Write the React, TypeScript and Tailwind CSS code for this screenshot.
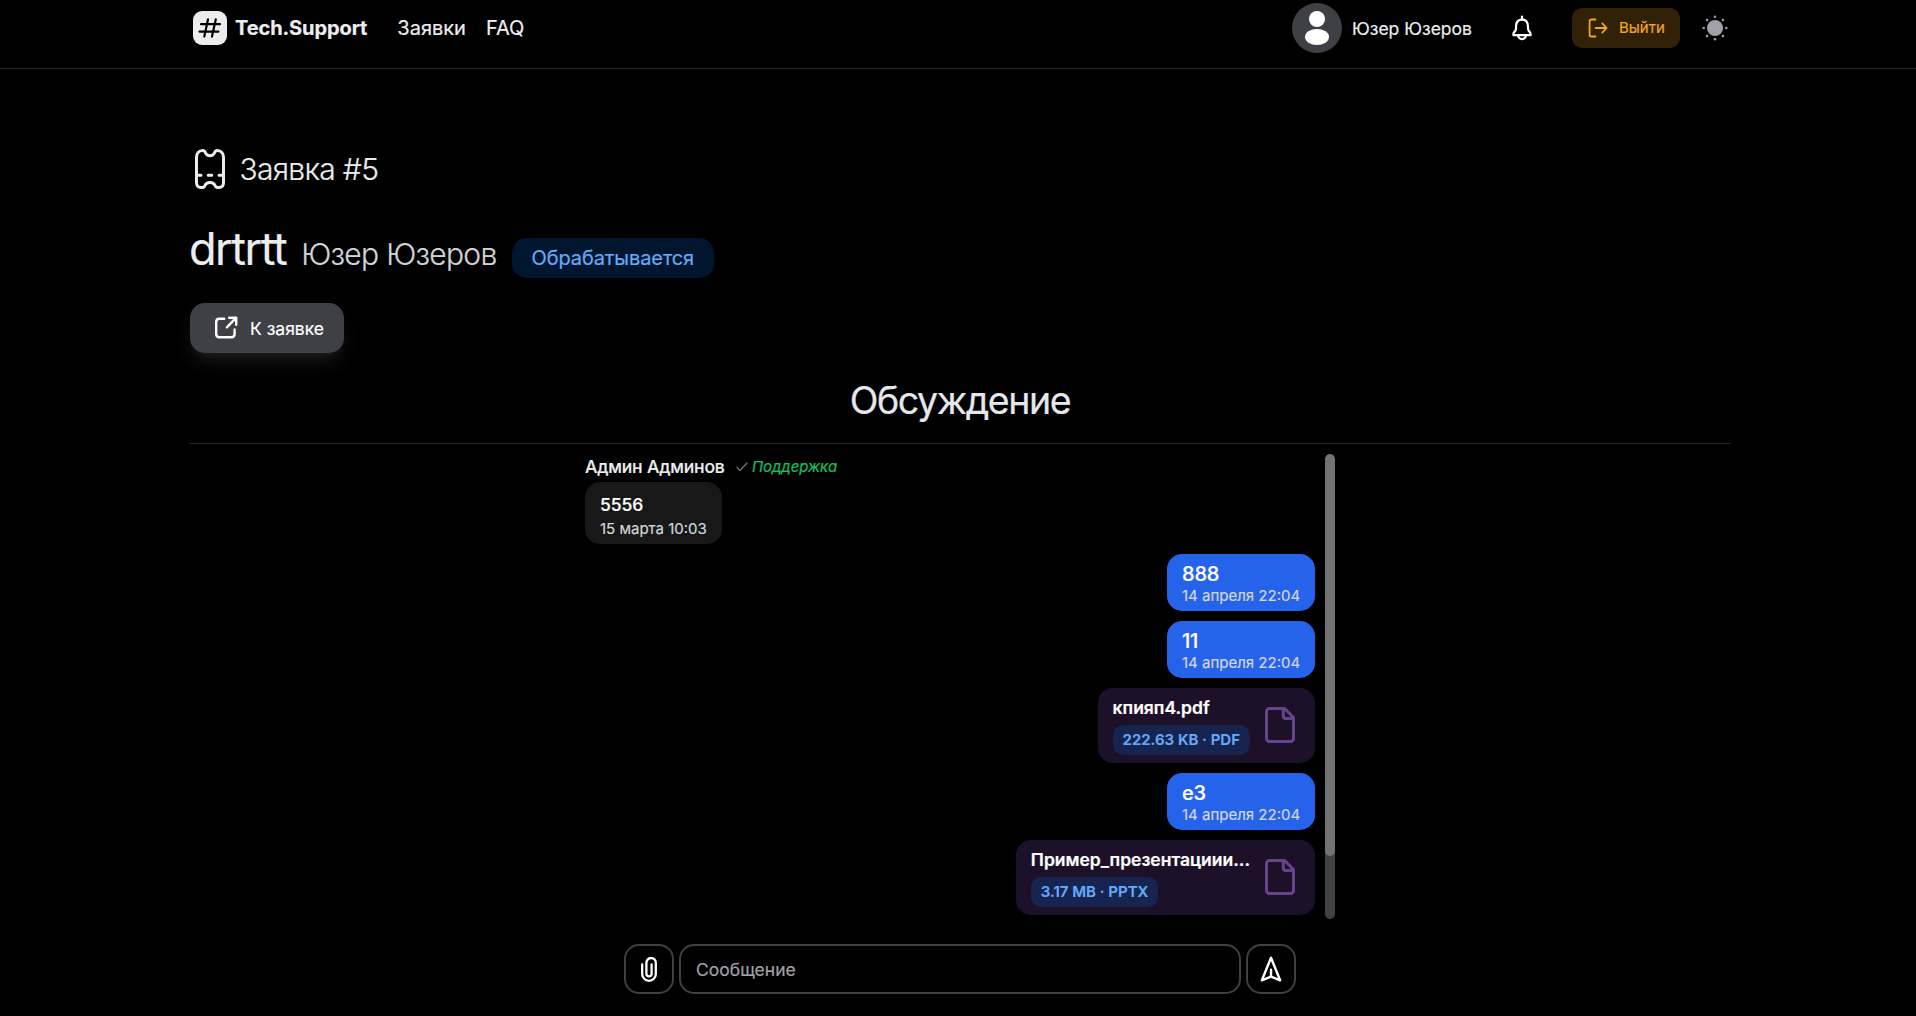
import React from "react";

function LogoIcon() {
  return (
    <svg width="34" height="34" viewBox="0 0 34 34" fill="none">
      <rect width="34" height="34" rx="9" fill="#ecedee" />
      <path
        d="M15 8.3 L11.3 25.600 M22.800 8.300 L19 25.600 M8 13.2 H27 M6.5 20.6 H25.500"
        stroke="#000"
        strokeWidth="2.2"
        strokeLinecap="round"
      />
    </svg>
  );
}

function BellIcon() {
  return (
    <svg width="30" height="30" viewBox="0 0 30 30" fill="none" stroke="#fff" strokeWidth="2.2" strokeLinecap="round" strokeLinejoin="round">
      <path d="M15 3.600V6" />
      <path d="M15 6.600c-3.700 0-5.700 2.700-5.900 6.200l-.2 3.400c-.1 1-.5 1.700-1.300 2.400-1 .9-1.300 1.600-1.300 3.500h17.400c0-1.900-.3-2.600-1.300-3.500-.8-.7-1.200-1.400-1.300-2.400l-.2-3.400c-.2-3.500-2.200-6.200-5.900-6.200z" />
      <path d="M11.200 23.400c.8 1.900 2.100 2.800 3.800 2.800s3-.9 3.800-2.800" />
    </svg>
  );
}

function LogoutIcon() {
  return (
    <svg width="20" height="20" viewBox="0 0 20 20" fill="none" stroke="#f5a524" strokeWidth="1.800" strokeLinecap="round" strokeLinejoin="round">
      <path d="M7.500 1.500H3.300c-1 0-1.700.6-1.700 1.700v13.600c0 1.100.7 1.700 1.700 1.700h4.200" />
      <path d="M7.600 10h10.800M14.300 5.400l4.300 4.600-4.300 4.600" />
    </svg>
  );
}

function SunIcon() {
  return (
    <svg width="28" height="28" viewBox="0 0 28 28" fill="#a1a1aa">
      <circle cx="14" cy="14" r="8" />
      {[
        [14, 2.7], [22, 6], [25.3, 14], [22, 22], [14, 25.3], [6, 22], [2.7, 14], [6, 6],
      ].map(([x, y]) => (
        <circle key={x + "-" + y} cx={x} cy={y} r="1.25" />
      ))}
    </svg>
  );
}

function TicketIcon() {
  return (
    <svg width="40" height="44" viewBox="0 0 40 44" fill="none" stroke="#ecedee" strokeWidth="3" strokeLinecap="round" strokeLinejoin="round">
      <path d="M12.8 3.5c1.5 0 2 .7 2.5 2 .8 2 2.4 3.3 4.7 3.3s3.900-1.300 4.700-3.300c.5-1.300 1-2 2.500-2 4 0 6.300 3 6.300 7v25c0 3.500-1.800 5-4.500 5h-1.500c-1.500 0-2-.7-2.500-2-.8-2-2.700-3-5-3s-4.200 1-5 3c-.5 1.300-1 2-2.500 2H11c-2.700 0-4.500-1.500-4.500-5v-25c0-4 2.300-7 6.300-7z" />
      <path d="M7 28.200h4M18.200 28.200h3.600M29 28.200h4" />
    </svg>
  );
}

function ExternalIcon() {
  return (
    <svg width="24" height="24" viewBox="0 0 24 24" fill="none" stroke="#fff" strokeWidth="2.400" strokeLinecap="round" strokeLinejoin="round">
      <path d="M9.200 2.700H4.400C2.200 2.700 1.200 3.700 1.200 5.900v12.200c0 2.200 1 3.200 3.200 3.200H16.400c2.200 0 3.200-1 3.200-3.200v-4.700" />
      <path d="M11.900 11.300 20.700 2.200M14.200 1.800h7v7" />
    </svg>
  );
}

function FileIcon() {
  return (
    <svg width="30" height="36" viewBox="0 0 30 36" fill="none" stroke="#66458a" strokeWidth="3" strokeLinejoin="round">
      <path d="M4.500 1.500H19.500L28.500 10.500V31.500a3 3 0 0 1-3 3h-21a3 3 0 0 1-3-3v-27a3 3 0 0 1 3-3z" />
      <path d="M18.300 1.500V9a2.500 2.500 0 0 0 2.500 2.500h7.700" />
    </svg>
  );
}

function ClipIcon() {
  return (
    <svg width="16" height="25" viewBox="0 0 16 25" fill="none" stroke="#fff" strokeWidth="2.300" strokeLinecap="round">
      <path d="M1.200 7.500v9.500a6.800 6.800 0 0 0 13.600 0V5.700a4.700 4.700 0 0 0-9.400 0v11.100a2.600 2.600 0 0 0 5.200 0V7.500" />
    </svg>
  );
}

function SendIcon() {
  return (
    <svg width="22" height="26" viewBox="0 0 22 26" fill="none" stroke="#fff" strokeWidth="2.400" strokeLinecap="round" strokeLinejoin="round">
      <path d="M11 1.800 1.900 24.300 11 20.700l9.100 3.600z" />
      <path d="M11 13.800v6.500" />
    </svg>
  );
}

function OwnMessage({ text }: { text: string }) {
  return (
    <div className="flex h-[57px] w-[148px] shrink-0 flex-col rounded-[15px] bg-[#2563eb] px-[15px] pt-[8px]">
      <div className="h-[24px] text-[20px] leading-[25px] font-medium tracking-[-0.2px] text-white">{text}</div>
      <div className="h-[20px] text-[15px] leading-[20px] whitespace-nowrap text-[#d1d5db]">14 апреля 22:04</div>
    </div>
  );
}

function FileMessage({ name, meta }: { name: string; meta: string }) {
  return (
    <div className="flex h-[75px] shrink-0 items-start gap-[15px] rounded-[15px] bg-[#1d1129] pr-[20px] pl-[15px]">
      <div className="flex flex-col items-start pt-[7px]">
        <div className="h-[30px] text-[17.5px] leading-[25px] font-semibold whitespace-nowrap text-white">{name}</div>
        <div className="flex h-[30px] items-center rounded-[10px] bg-[#172450] px-[10px] text-[15px] font-semibold whitespace-nowrap text-[#66aaf9]">
          {meta}
        </div>
      </div>
      <div className="pt-[19px]">
        <FileIcon />
      </div>
    </div>
  );
}

export default function App() {
  return (
    <div className="h-[1016px] w-[1916px] overflow-hidden bg-black font-['Inter',sans-serif] text-[#ecedee] [-webkit-text-stroke:0.2px]">
      <header className="h-[69px] border-b border-[#262626] pr-[186px] pl-[190px]">
        <div className="flex h-[56px] items-center">
          <div className="ml-[3px] flex items-center">
            <LogoIcon />
            <span className="ml-[8px] text-[20px] font-bold tracking-[-0.1px]">Tech.Support</span>
          </div>
          <nav className="ml-[30px] flex gap-[20px] text-[20px]">
            <a>Заявки</a>
            <a>FAQ</a>
          </nav>
          <div className="ml-auto flex items-center">
            <div className="flex h-[50px] w-[50px] flex-col items-center rounded-full bg-[#3f3f46] pt-[8px]">
              <div className="h-[16px] w-[16px] rounded-full bg-white" />
              <div className="mt-[2px] h-[16px] w-[24px] rounded-[50%] bg-white" />
            </div>
            <span className="ml-[10px] w-[120px] pt-[2px] text-[17.5px] whitespace-nowrap">Юзер Юзеров</span>
            <div className="ml-[35px]">
              <BellIcon />
            </div>
            <button className="ml-[35px] flex h-[40px] w-[108px] items-center rounded-[10px] bg-[#312107] pl-[16px] text-[15px] text-[#f5a524]">
              <LogoutIcon />
              <span className="ml-[11px]">Выйти</span>
            </button>
            <div className="mr-[1px] ml-[21px]">
              <SunIcon />
            </div>
          </div>
        </div>
      </header>

      <main className="pr-[186px] pl-[190px]">
        <div className="mt-[78px] flex h-[44px] items-center">
          <TicketIcon />
          <h2 className="ml-[9.5px] text-[30px] font-light tracking-[-0.7px]">Заявка #5</h2>
        </div>
        <div className="mt-[28px] flex h-[60px] items-baseline">
          <h1 className="-ml-px text-[45px] leading-[60px] tracking-[-1.45px]">drtrtt</h1>
          <span className="ml-[15px] text-[30px] font-light tracking-[-0.7px] text-[#d1d5db]">Юзер Юзеров</span>
          <span className="ml-[15px] flex h-[40px] items-center rounded-[15px] bg-[#00162f] px-[20px] text-[20px] tracking-[-0.1px] text-[#66aaf9]">
            Обрабатывается
          </span>
        </div>
        <button className="mt-[24px] flex h-[50px] w-[154px] items-center rounded-[15px] bg-[#3f3f46] pl-[25px] text-[17.5px] text-white shadow-[0_12px_19px_-4px_rgba(63,63,70,0.4),0_5px_8px_-5px_rgba(63,63,70,0.4)]">
          <ExternalIcon />
          <span className="ml-[11px] pt-[2px] whitespace-nowrap">К заявке</span>
        </button>
        <h2 className="mt-[25px] h-[45px] text-center text-[37.5px] leading-[46px] tracking-[-1.4px] text-[#e5e7eb]">Обсуждение</h2>
        <div className="mt-[20px] border-b border-[#262626]" />

        <section className="mx-auto mt-[10px] flex h-[465px] w-[750px]">
          <div className="flex flex-1 flex-col items-end gap-[10px]">
            <div className="w-full self-start">
              <div className="flex h-[28px] items-center pb-[3px] text-[17.5px]">
                <span className="leading-[25px] font-medium tracking-[-0.19px] whitespace-nowrap">Админ Админов</span>
                <svg className="mt-px ml-[11.5px]" width="12" height="10" viewBox="0 0 12 10" fill="none" stroke="#71717a" strokeWidth="1.300" strokeLinecap="round" strokeLinejoin="round">
                  <path d="M1 5.500 4 8.500 11 1" />
                </svg>
                <span className="ml-[4px] pt-px text-[15px] tracking-[-0.1px] text-[#17c05c] italic">Поддержка</span>
              </div>
              <div className="h-[62px] w-[137px] rounded-[15px] bg-[#181818] px-[15px] pt-[10px]">
                <div className="h-[27px] text-[17.5px] leading-[25px] font-medium tracking-[-0.1px] text-white">5556</div>
                <div className="text-[15px] leading-[20px] whitespace-nowrap text-[#d1d5db]">15 марта 10:03</div>
              </div>
            </div>
            <OwnMessage text="888" />
            <OwnMessage text="11" />
            <FileMessage name="кпияп4.pdf" meta="222.63 KB · PDF" />
            <OwnMessage text="e3" />
            <FileMessage name="Пример_презентациии..." meta="3.17 MB · PPTX" />
          </div>
          <div className="ml-[10px] w-[10px] overflow-hidden rounded-full bg-[#424242]">
            <div className="h-[402px] rounded-full bg-[#737373]" />
          </div>
        </section>

        <form className="mx-auto mt-[25px] flex w-[672px] gap-[5px]">
          <button type="button" className="flex h-[50px] w-[50px] items-center justify-center rounded-[15px] border-2 border-[#3f3f46]">
            <ClipIcon />
          </button>
          <div className="flex h-[50px] flex-1 items-center rounded-[15px] border-2 border-[#3f3f46] px-[15px] pt-[2px] text-[17.5px] text-[#a1a1aa]">
            Сообщение
          </div>
          <button type="button" className="flex h-[50px] w-[50px] items-center justify-center rounded-[15px] border-2 border-[#3f3f46]">
            <SendIcon />
          </button>
        </form>
      </main>
    </div>
  );
}
